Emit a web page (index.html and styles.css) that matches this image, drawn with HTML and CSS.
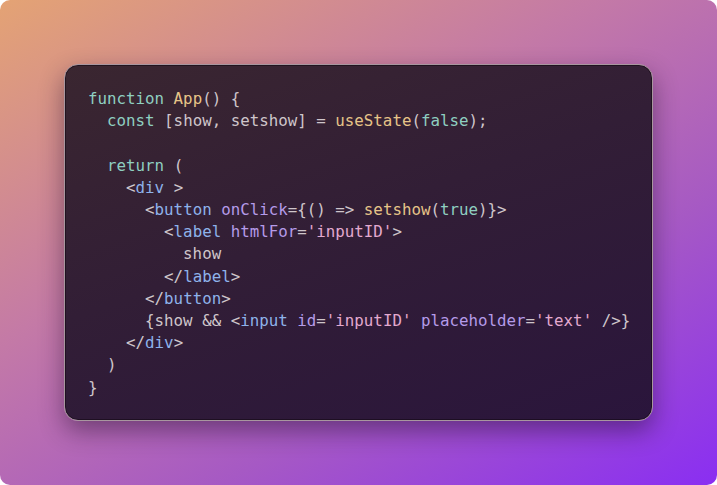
FILE: index.html
```html
<!DOCTYPE html>
<html lang="en">
<head>
<meta charset="utf-8">
<title>Code snippet</title>
<link rel="stylesheet" href="styles.css">
</head>
<body>
<main class="canvas">
  <section class="card">
<pre class="code"><span class="kw">function</span> <span class="fn">App</span><span class="p">() {</span>
  <span class="kw">const</span> <span class="p">[show, setshow] = </span><span class="fn">useState</span><span class="p">(</span><span class="kw">false</span><span class="p">);</span>

  <span class="kw">return</span> <span class="p">(</span>
    <span class="p">&lt;</span><span class="tag">div</span> <span class="p">&gt;</span>
      <span class="p">&lt;</span><span class="tag">button</span> <span class="attr">onClick</span><span class="p">={() =&gt; </span><span class="fn">setshow</span><span class="p">(</span><span class="kw">true</span><span class="p">)}&gt;</span>
        <span class="p">&lt;</span><span class="tag">label</span> <span class="attr">htmlFor</span><span class="p">=</span><span class="str">'inputID'</span><span class="p">&gt;</span>
          <span class="p">show</span>
        <span class="p">&lt;/</span><span class="tag">label</span><span class="p">&gt;</span>
      <span class="p">&lt;/</span><span class="tag">button</span><span class="p">&gt;</span>
      <span class="p">{show &amp;&amp; &lt;</span><span class="tag">input</span> <span class="attr">id</span><span class="p">=</span><span class="str">'inputID'</span> <span class="attr">placeholder</span><span class="p">=</span><span class="str">'text'</span> <span class="p">/&gt;}</span>
    <span class="p">&lt;/</span><span class="tag">div</span><span class="p">&gt;</span>
  <span class="p">)</span>
<span class="p">}</span></pre>
  </section>
</main>
</body>
</html>
```
FILE: styles.css
```css
html, body {
  margin: 0;
  padding: 0;
  background: #ffffff;
}

.canvas {
  width: 717px;
  height: 485px;
  box-sizing: border-box;
  border-radius: 10px;
  background: linear-gradient(150deg, #e4a374 0%, #c47aa6 38%, #a659c4 68%, #8a2ef2 100%);
  padding: 64px 64px 0 64px;
  overflow: hidden;
}

.card {
  width: 589px;
  height: 357px;
  box-sizing: border-box;
  border-radius: 14px;
  border: 1px solid #a8969f;
  box-shadow: inset 0 0 0 1px rgba(20, 10, 20, 0.6), 0 10px 24px rgba(30, 10, 40, 0.45);
  background: linear-gradient(160deg, #3a2630 0%, #321e36 45%, #2a153c 100%);
  padding: 23px 23px;
}

.code {
  margin: 0;
  font-family: "DejaVu Sans Mono", "Liberation Mono", monospace;
  font-size: 15.8px;
  line-height: 22.2px;
  color: #cfc6cb;
  white-space: pre;
}

.kw { color: #8fcfc1; }
.fn { color: #e6c488; }
.p { color: #cfc6cb; }
.tag { color: #8eb2ea; }
.attr { color: #b59be9; }
.str { color: #e3a9cf; }
```
